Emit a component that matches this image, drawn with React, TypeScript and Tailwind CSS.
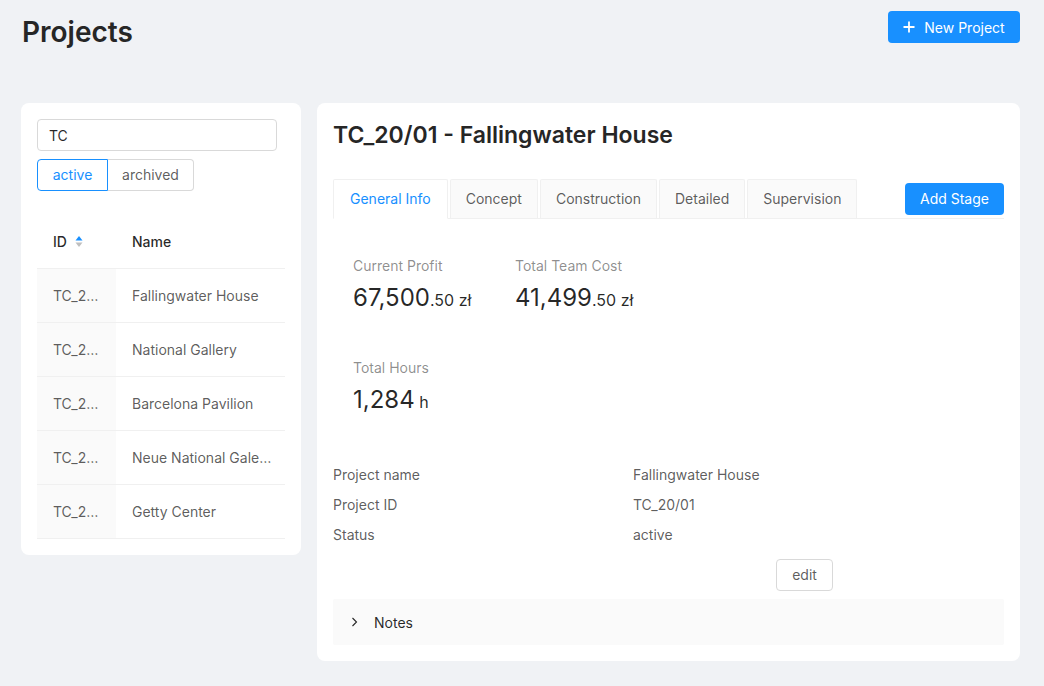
import React from "react";

const rows = [
  "Fallingwater House",
  "National Gallery",
  "Barcelona Pavilion",
  "Neue National Gale…",
  "Getty Center",
];

function Stat({ label, main, suffix }: { label: string; main: string; suffix: string }) {
  return (
    <div className="w-[162px]">
      <div className="text-[14px] leading-[22px] text-[rgba(0,0,0,0.45)] mb-[4px]">{label}</div>
      <div className="text-[24px] leading-[34px] text-[rgba(0,0,0,0.85)] whitespace-nowrap">
        {main}
        <span className="text-[16px]">{suffix}</span>
      </div>
    </div>
  );
}

export default function App() {
  const tabs = ["General Info", "Concept", "Construction", "Detailed", "Supervision"];
  return (
    <div
      className="min-h-[686px] bg-[#f0f2f5] pl-[21px] pr-[24px] text-[14px] text-[rgba(0,0,0,0.85)]"
      style={{ fontFamily: 'Inter, "Noto Sans", "Liberation Sans", sans-serif' }}
    >
      <div className="flex items-start justify-between pt-[11px] h-[103px]">
        <h1 className="text-[28px] leading-[42px] font-semibold text-[#262626] pl-[1px] mt-[0px]">Projects</h1>
        <button className="h-[32px] w-[132px] rounded-[4px] bg-[#1890ff] text-white text-[14px] flex items-center justify-center gap-[9px]">
          <svg width="12" height="12" viewBox="0 0 12 12">
            <path d="M6 0.5V11.5M0.5 6H11.5" stroke="white" strokeWidth="1.8" />
          </svg>
          New Project
        </button>
      </div>

      <div className="flex items-start gap-[16px]">
        {/* Left card */}
        <div className="w-[280px] bg-white rounded-[8px] p-[16px]">
          <div className="w-[240px] h-[32px] border border-[#d9d9d9] rounded-[4px] px-[11px] flex items-center text-[rgba(0,0,0,0.85)]">
            TC
          </div>
          <div className="flex mt-[8px] h-[32px]">
            <div className="w-[71px] h-[32px] border border-[#1890ff] rounded-l-[4px] flex items-center justify-center text-[#1890ff] relative z-10 pb-[1px]">
              active
            </div>
            <div className="w-[86px] h-[32px] border border-l-0 border-[#d9d9d9] rounded-r-[4px] flex items-center justify-center text-[rgba(0,0,0,0.65)] pb-[1px]">
              archived
            </div>
          </div>
          <div className="mt-[25px] w-[248px]">
            <div className="flex h-[53px] border-b border-[#f0f0f0] items-center pb-[1px]">
              <div className="w-[79px] pl-[16px] flex items-center gap-[8px] font-medium text-[rgba(0,0,0,0.85)]">
                ID
                <svg width="8" height="13" viewBox="0 0 8 13">
                  <path d="M0.5 5.5L4 1L7.5 5.5Z" fill="#1890ff" />
                  <path d="M0.5 7.5L4 12L7.5 7.5Z" fill="#bfbfbf" />
                </svg>
              </div>
              <div className="pl-[16px] font-medium text-[rgba(0,0,0,0.85)]">Name</div>
            </div>
            {rows.map((r) => (
              <div key={r} className="flex h-[54px] border-b border-[#f0f0f0] text-[rgba(0,0,0,0.65)]">
                <div className="w-[79px] bg-[#fafafa] pl-[16px] flex items-center">TC_2…</div>
                <div className="pl-[16px] flex items-center whitespace-nowrap">{r}</div>
              </div>
            ))}
          </div>
        </div>

        {/* Right card */}
        <div className="flex-1 bg-white rounded-[8px] p-[16px] pb-[16px]">
          <h2 className="text-[23px] leading-[34px] font-semibold text-[#262626] mt-[-1px]">
            TC_20/01 - Fallingwater House
          </h2>
          <div className="mt-[27px] flex items-end border-b border-[#f0f0f0] relative">
            {tabs.map((t, i) => (
              <div
                key={t}
                className={
                  i === 0
                    ? "h-[40px] px-[16px] pb-[2px] mr-[2px] flex items-center whitespace-nowrap border border-[#f0f0f0] border-b-white bg-white rounded-t-[2px] text-[#1890ff] mb-[-1px]"
                    : "h-[39px] px-[15px] pb-[2px] mr-[2px] flex items-center whitespace-nowrap border border-b-0 border-[#f0f0f0] bg-[#fafafa] rounded-t-[2px] text-[rgba(0,0,0,0.65)]"
                }
              >
                {t}
              </div>
            ))}
            <button className="ml-auto mb-[3px] h-[32px] w-[99px] rounded-[4px] bg-[#1890ff] text-white text-[14px] pb-[1px]">
              Add Stage
            </button>
          </div>

          <div className="pl-[20px] pt-[36px]">
            <div className="flex">
              <Stat label="Current Profit" main="67,500" suffix=".50 zł" />
              <Stat label="Total Team Cost" main="41,499" suffix=".50 zł" />
            </div>
            <div className="flex mt-[40px]">
              <Stat label="Total Hours" main="1,284" suffix=" h" />
            </div>
          </div>

          <div className="mt-[40px] text-[rgba(0,0,0,0.65)]">
            {[
              ["Project name", "Fallingwater House"],
              ["Project ID", "TC_20/01"],
              ["Status", "active"],
            ].map(([k, v]) => (
              <div key={k} className="flex h-[30px] items-center">
                <div className="w-[300px]">{k}</div>
                <div>{v}</div>
              </div>
            ))}
          </div>
          <div className="mt-[10px] pl-[443px]">
            <button className="h-[32px] w-[57px] border border-[#d9d9d9] rounded-[4px] text-[rgba(0,0,0,0.65)] bg-white pb-[2px]">
              edit
            </button>
          </div>
          <div className="mt-[8px] h-[46px] bg-[#fafafa] rounded-[2px] flex items-center pl-[17px] gap-[14px] text-[rgba(0,0,0,0.85)]">
            <svg width="10" height="10" viewBox="0 0 10 10">
              <path d="M2.5 1L6.5 5L2.5 9" stroke="#262626" strokeWidth="1.1" fill="none" />
            </svg>
            Notes
          </div>
        </div>
      </div>
    </div>
  );
}
